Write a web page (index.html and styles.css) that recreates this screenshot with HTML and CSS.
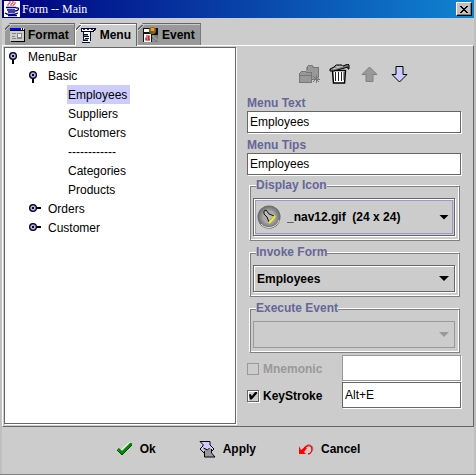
FILE: index.html
```html
<!DOCTYPE html>
<html lang="en">
<head>
<meta charset="utf-8">
<title>Form -- Main</title>
<link rel="stylesheet" href="styles.css">
</head>
<body>
<svg class="defs" aria-hidden="true">
  <symbol id="open" viewBox="0 0 12 12"><path d="M4 7v5" stroke="#000" stroke-width="2"/><circle cx="4" cy="4" r="3.4" fill="#99c" stroke="#001" stroke-width="1.2"/><circle cx="4" cy="4" r="1.8" fill="#ccf"/><path d="M3 3h2v2H3z" fill="#003"/></symbol>
  <symbol id="closed" viewBox="0 0 12 12"><path d="M7 4h5" stroke="#000" stroke-width="2"/><circle cx="4" cy="4" r="3.4" fill="#99c" stroke="#001" stroke-width="1.2"/><circle cx="4" cy="4" r="1.8" fill="#ccf"/><path d="M3 3h2v2H3z" fill="#003"/></symbol>
</svg>
<div class="window">
  <header class="titlebar">
    <svg width="16" height="16" viewBox="0 0 16 16"><path d="M0 0h16v16H0z" fill="#fff"/><path d="M6 0v2L4 3v2M9 0v2L7 3v2M11 1v2l-2 1v1" fill="none" stroke="#e22"/><path d="M2 6.500h10M3 9h8M4 11h7M12 7c4-1 3 3-1 3M1 12c2 2 9 2 13 0M4 14.500h9" fill="none" stroke="#008" stroke-width="1.300"/></svg>
    <h1>Form -- Main</h1>
    <button class="close" aria-label="Close"><svg width="8" height="7" viewBox="0 0 8 7" shape-rendering="crispEdges"><path d="M0 0h2v1h1v1h2V1h1V0h2v1H7v1H6v1H5v1h1v1h1v1h1v1H6V6H5V5H3v1H2v1H0V6h1V5h1V4h1V3H2V2H1V1H0z"/></svg></button>
  </header>
  <nav class="tabs" role="tablist">
    <button class="tab" role="tab"><svg width="15" height="14" viewBox="0 0 15 14" shape-rendering="crispEdges"><path d="M0 0h14v13H0z" fill="#ccc"/><path d="M0 0h11v2H0z" fill="#00f"/><path d="M11 0h3v2h-3z" fill="#fff"/><path d="M12 0h1v2h-1z" fill="#008"/><path d="M14 1v12H1M0 2h14" fill="none" stroke="#000"/><path d="M2 5h4M2 8h3M2 10h4" stroke="#888"/><path d="M7 5h5v6H7z" fill="#888"/><path d="M8 6h3v3H8z" fill="#eee"/></svg>Format</button>
    <button class="tab selected" role="tab" aria-selected="true"><svg width="15" height="15" viewBox="0 0 15 15" shape-rendering="crispEdges"><path d="M0 0h14v4H0z" fill="#fff"/><path d="M0 3V0h14v1h-1v1h-1v1H0" fill="none" stroke="#003"/><path d="M2 1h2v1H2zM6 1h2v1H6zM10 1h2v1h-2z" fill="#22b"/><path d="M2 4h7v10H2z" fill="#fff"/><path d="M2 4v9M9 4v9M1 14h8M3 6h4M3 8h5M4 10h4M3 12h4" fill="none" stroke="#013"/><path d="M3 7h4M3 11h4" stroke="#77b"/></svg>Menu</button>
    <button class="tab" role="tab"><svg width="16" height="16" viewBox="0 0 16 16"><path d="M0 1h15v14H0z" fill="#111"/><path d="M1 2h5v3H1zM1 7h7v8H1z" fill="#fff"/><path d="M9 8h6v7H9z" fill="#777"/><path d="M9 9h2v2h2v2h2M9 13h2v2" fill="none" stroke="#aaa"/><path d="M6 4h8" stroke="#009" stroke-width="3"/><circle cx="9.500" cy="3.500" r="3.500" fill="#961"/><path d="M8 1h3v3H8z" fill="#e93"/><path d="M7 4h3v2H7z" fill="#372"/><path d="M3 9h3v4H3v-2h3M6 13h1" fill="none" stroke="#a00" stroke-width="1.200"/></svg>Event</button>
  </nav>
  <main class="panel">
    <ul class="tree">
      <li><span class="node"><svg width="12" height="12"><use href="#open"/></svg>MenuBar</span>
        <ul>
          <li><span class="node"><svg width="12" height="12"><use href="#open"/></svg>Basic</span>
            <ul>
              <li><span class="leaf current">Employees</span></li>
              <li><span class="leaf">Suppliers</span></li>
              <li><span class="leaf">Customers</span></li>
              <li><span class="leaf">------------</span></li>
              <li><span class="leaf">Categories</span></li>
              <li><span class="leaf">Products</span></li>
            </ul>
          </li>
          <li><span class="node"><svg width="12" height="12"><use href="#closed"/></svg>Orders</span></li>
          <li><span class="node"><svg width="12" height="12"><use href="#closed"/></svg>Customer</span></li>
        </ul>
      </li>
    </ul>
    <form class="editor">
      <div class="tools">
        <button type="button" aria-label="New" disabled><svg width="21" height="20" viewBox="0 0 21 20" shape-rendering="crispEdges"><path d="M7 8V3l2-2h4l2 2h5v13H7z" fill="#999"/><path d="M1 8l1-1h5l1 1h5v10H1z" fill="#999"/><path d="M8.500 6V2.500l1-1h3l2 2h5v8M.5 18.500h12v-10h-5l-1-1h-4l-2 2zM.5 11.500h12" fill="none" stroke="#777"/><path d="M14 12l6 6M20 12l-6 6M17 11v8M13 15h8" stroke="#777"/></svg></button>
        <button type="button" aria-label="Delete"><svg width="21" height="20" viewBox="0 0 21 20"><path d="M3.500 6.500h13l-1 12.500h-11z" fill="#fff" stroke="#000" stroke-width="1.500"/><path d="M6.500 8v9M9.500 8v9M12.500 8v9M15 8v8" stroke="#222"/><path d="M1 5l4-2 2-2h6l1 1 5-2 1 1v4h-1V3L5 7H1z" fill="#777" stroke="#000"/><path d="M7 2l2 1 2-1M4 5l10-3" fill="none" stroke="#ccc"/></svg></button>
        <button type="button" aria-label="Move up" disabled><svg width="17" height="17" viewBox="0 0 17 17"><path d="M8.500 1l7.500 7.500h-4v7H5v-7H1z" fill="#999" stroke="#808080"/></svg></button>
        <button type="button" aria-label="Move down"><svg width="17" height="17" viewBox="0 0 17 17"><path d="M8.500 16L1 8.500h4v-8h7v8h4z" fill="#ccf" stroke="#000"/></svg></button>
      </div>
      <label class="caption" for="text">Menu Text</label>
      <input class="field" id="text" type="text" value="Employees">
      <label class="caption" for="tips">Menu Tips</label>
      <input class="field" id="tips" type="text" value="Employees">
      <fieldset class="group">
        <legend><label for="icon">Display Icon</label></legend>
        <div class="combo tall">
          <svg width="24" height="24" viewBox="0 0 24 24"><defs><radialGradient id="ball"><stop offset="0.500" stop-color="#aaa"/><stop offset="1" stop-color="#666"/></radialGradient></defs><circle cx="12" cy="12" r="11.500" fill="url(#ball)"/><path d="M4 19A10.500 10.500 0 0 0 22 15" fill="none" stroke="#ddd"/><path d="M7 6l2-1 3 4 5 2-5 6-2-5-3-3z" fill="#bbb" stroke="#111"/><path d="M12 18l6-7" stroke="#ee2" stroke-width="2"/></svg>
          <select id="icon"><option>_nav12.gif&nbsp; (24 x 24)</option></select>
        </div>
      </fieldset>
      <fieldset class="group">
        <legend><label for="invoke">Invoke Form</label></legend>
        <div class="combo"><select id="invoke"><option>Employees</option></select></div>
      </fieldset>
      <fieldset class="group">
        <legend><label for="execute">Execute Event</label></legend>
        <div class="combo off"><select id="execute" disabled><option></option></select></div>
      </fieldset>
      <div class="keys">
        <label class="check off"><input type="checkbox" disabled>Mnemonic</label>
        <input class="field off" type="text" aria-label="Mnemonic key" disabled>
        <label class="check"><input type="checkbox" checked>KeyStroke</label>
        <input class="field" type="text" aria-label="Key stroke" value="Alt+E">
      </div>
    </form>
  </main>
  <footer class="actions">
    <button><svg width="17" height="16" viewBox="0 0 17 16"><path d="M1 7l3 3 10-9" fill="none" stroke="#fff"/><path d="M1 8l2-1 3 3 8-8h2v2L6 14z" fill="#080"/><path d="M1 9l5 5L16 4" fill="none" stroke="#041"/></svg>Ok</button>
    <button><svg width="17" height="18" viewBox="0 0 17 18"><path d="M2 1h9v4l4 4-4 4-5-5-3 3-2-2 3-3V4L2 2zM7 15h6v3H8z" fill="#ccf"/><path d="M1 1.500h10V5l4 4-3 3M1 1.500l3 3V6L1 9l4 4" fill="none" stroke="#000"/><path d="M5 8l4 2 2-2 1 1v4l4 4H6V13z" fill="#999"/><path d="M4.500 8l4 2 2-2M5.500 11v6H16l-3.500-4V9" fill="none" stroke="#000"/></svg>Apply</button>
    <button><svg width="15" height="11" viewBox="0 0 15 11"><path d="M0 2v8h7L5 8l3-4-2-1-4 3z" fill="#f00"/><path d="M5 5c3-5 8-4 8 0 0 3-2 5-4 5" fill="none" stroke="#f00" stroke-width="1.500"/><path d="M8 1c5-1 7 3 5 6" fill="none" stroke="#a66"/></svg>Cancel</button>
  </footer>
</div>
</body>
</html>
```
FILE: styles.css
```css
* {
  box-sizing: border-box;
}

body {
  margin: 0;
  background: #c0c0c0;
  color: #000;
  font: 12px/14px "Liberation Sans", Arial, sans-serif;
}

button,
input,
select {
  margin: 0;
  padding: 0;
  border: 0;
  border-radius: 0;
  background: none;
  color: inherit;
  font: inherit;
  appearance: none;
}

svg {
  display: block;
  flex: none;
}

ul {
  margin: 0;
  padding: 0;
  list-style: none;
}

.defs {
  position: absolute;
  width: 0;
  height: 0;
}

.window {
  display: flex;
  flex-direction: column;
  min-height: 100vh;
  padding: 0 2px;
  border-bottom: 1px solid #808080;
  background: linear-gradient(#ccc, #ccc) content-box;
}

.titlebar {
  display: flex;
  align-items: center;
  height: 18px;
  padding: 0 2px;
  background: linear-gradient(90deg, #000080, #1084d0);
  color: #fff;
}

.titlebar h1 {
  flex: 1;
  margin: 0 0 0 2px;
  font: 12px/16px "Liberation Serif", "Times New Roman", serif;
}

.close {
  display: grid;
  place-items: center;
  width: 16px;
  height: 14px;
  border: 1px solid;
  border-color: #fff #000 #000 #fff;
  background: #c0c0c0;
  box-shadow: inset -1px -1px #808080;
}

.tabs {
  display: flex;
  padding: 5px 2px 0;
}

.tab {
  display: flex;
  align-items: center;
  gap: 3px;
  height: 22px;
  padding: 0 5px 0 6px;
  border-top: 1px solid #666;
  border-right: 1px solid #666;
  background: linear-gradient(135deg, transparent 4px, #666 4px, #666 5px, #ccc 5px, #ccc 6px, transparent 6px), #999;
  clip-path: polygon(6px 0, 100% 0, 100% 100%, 0 100%, 0 6px);
  box-shadow: inset 1px 1px #ccc;
  font-weight: bold;
}

.tab.selected {
  height: 23px;
  margin-bottom: -1px;
  gap: 4px;
  background: linear-gradient(135deg, transparent 4px, #666 4px, #666 5px, #fff 5px, #fff 6px, transparent 6px), #ccc;
  box-shadow: inset 1px 1px #fff;
  z-index: 1;
}

.panel {
  display: grid;
  flex: 1;
  grid-template-columns: 233fr 238fr;
  padding: 1px 0 2px 1px;
  border: 1px solid;
  border-color: #fff #666 #666 #fff;
}

.tree {
  padding-left: 4px;
  border: 1px solid #666;
  box-shadow: 1px 1px #fff;
  background: #fff;
}

.tree > li {
  margin-top: -1px;
}

.tree ul {
  padding-left: 20px;
}

.node,
.leaf {
  display: flex;
  align-items: center;
  width: fit-content;
  height: 19px;
}

.node {
  gap: 7px;
}

.node svg {
  margin-top: 3px;
}

.leaf {
  margin-left: 18px;
  padding: 0 3px 0 1px;
}

.current {
  background: #ccf;
}

.editor {
  padding: 14px 12px 0 11px;
}

.tools {
  display: flex;
  align-items: center;
  justify-content: center;
  gap: 4px;
  height: 26px;
}

.tools button {
  display: grid;
  place-items: center;
  width: 26px;
  height: 24px;
}

.caption {
  display: block;
  padding-top: 4px;
  color: #669;
  font-weight: bold;
  line-height: 16px;
}

.tools + .caption {
  padding-top: 8px;
}

.field {
  display: block;
  width: 100%;
  height: 22px;
  padding: 0 2px;
  border: 1px solid #666;
  background: #fff;
  box-shadow: 1px 1px #fff;
}

.group {
  min-width: 0;
  margin: 3px 1px 0 2px;
  padding: 6px 4px 4px 3px;
  border: 1px solid;
  border-color: #fff #808080 #808080 #fff;
  box-shadow: inset 1px 1px #808080, inset -1px -1px #fff;
}

.group + .group {
  margin-top: 4px;
}

.group legend {
  margin-left: 3px;
  padding: 0;
  background: #ccc;
  color: #669;
  font-weight: bold;
}

.combo {
  position: relative;
  display: flex;
  align-items: center;
  height: 27px;
  padding: 0 3px;
  border: 1px solid #666;
  box-shadow: inset 1px 1px #fff, 1px 1px #fff;
}

.combo.tall {
  height: 38px;
  gap: 6px;
  outline: 1px solid #99c;
  outline-offset: -3px;
}

.combo select {
  flex: 1;
  min-width: 0;
  height: 100%;
  font-weight: bold;
}

.combo::after {
  position: absolute;
  right: 5px;
  width: 10px;
  height: 5px;
  background: #000;
  clip-path: polygon(0 0, 100% 0, 50% 100%);
  content: "";
  pointer-events: none;
}

.combo.off {
  border-color: #999;
  box-shadow: none;
}

.combo.off::after {
  background: #999;
}

.keys {
  display: grid;
  grid-template-columns: 95fr 119fr;
  grid-auto-rows: 27px;
  margin-top: 2px;
}

.keys .field {
  height: 26px;
}

.keys .field.off {
  border-color: #999;
}

.check {
  display: flex;
  align-items: center;
  gap: 4px;
  font-weight: bold;
}

.check input {
  display: grid;
  place-items: center;
  width: 12px;
  height: 12px;
  border: 1px solid #666;
  box-shadow: inset 1px 1px #fff, 1px 1px #fff;
}

.check input:checked::before {
  width: 8px;
  height: 8px;
  background: #000;
  clip-path: polygon(0 35%, 25% 35%, 35% 60%, 80% 0, 100% 0, 100% 25%, 35% 100%, 10% 100%);
  content: "";
}

.check.off {
  color: #999;
}

.check.off input {
  border-color: #999;
  box-shadow: none;
}

.actions {
  display: flex;
  align-items: center;
  justify-content: center;
  gap: 43px;
  height: 47px;
  padding-bottom: 3px;
}

.actions button {
  display: flex;
  align-items: center;
  gap: 7px;
  font-weight: bold;
}
```
